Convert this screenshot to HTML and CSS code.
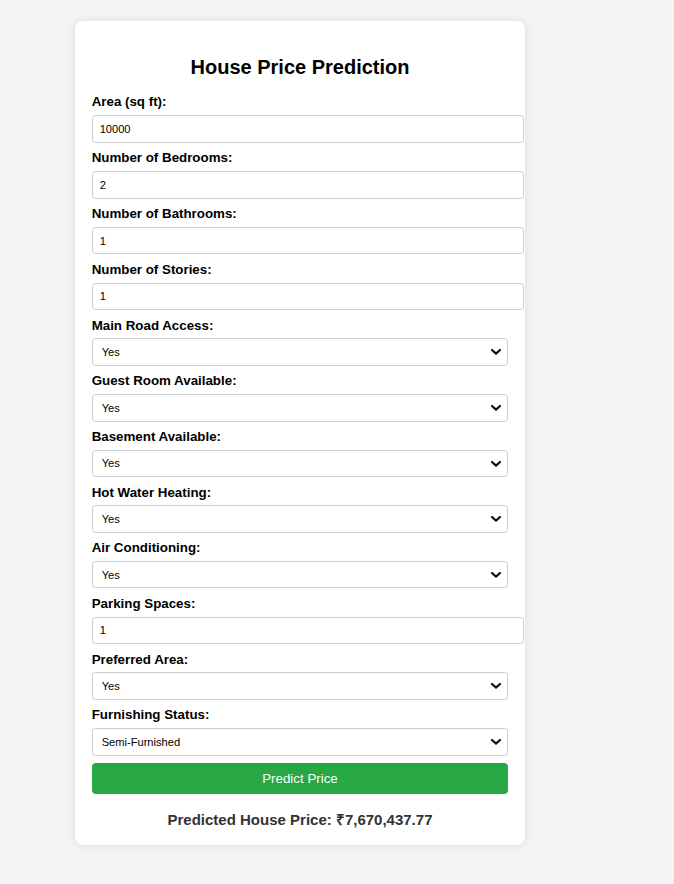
FILE: index.html
```html
<!DOCTYPE html>
<html lang="en">
<head>
<meta charset="utf-8">
<title>House Price Prediction</title>
<link rel="stylesheet" href="styles.css">
</head>
<body>
<div class="card">
  <h2 class="title">House Price Prediction</h2>
  <form class="form">
    <label class="label">Area (sq ft):</label>
    <input class="input" type="text" value="10000">
    <label class="label">Number of Bedrooms:</label>
    <input class="input" type="text" value="2">
    <label class="label">Number of Bathrooms:</label>
    <input class="input" type="text" value="1">
    <label class="label">Number of Stories:</label>
    <input class="input" type="text" value="1">
    <label class="label">Main Road Access:</label>
    <div class="select-wrap"><select class="select"><option>Yes</option><option>No</option></select><svg class="chevron" viewBox="0 0 10 6" width="10" height="6"><polyline points="1,1 5,4.6 9,1" fill="none" stroke="#111" stroke-width="2.2" stroke-linecap="round" stroke-linejoin="round"/></svg></div>
    <label class="label">Guest Room Available:</label>
    <div class="select-wrap"><select class="select"><option>Yes</option><option>No</option></select><svg class="chevron" viewBox="0 0 10 6" width="10" height="6"><polyline points="1,1 5,4.6 9,1" fill="none" stroke="#111" stroke-width="2.2" stroke-linecap="round" stroke-linejoin="round"/></svg></div>
    <label class="label">Basement Available:</label>
    <div class="select-wrap"><select class="select"><option>Yes</option><option>No</option></select><svg class="chevron" viewBox="0 0 10 6" width="10" height="6"><polyline points="1,1 5,4.6 9,1" fill="none" stroke="#111" stroke-width="2.2" stroke-linecap="round" stroke-linejoin="round"/></svg></div>
    <label class="label">Hot Water Heating:</label>
    <div class="select-wrap"><select class="select"><option>Yes</option><option>No</option></select><svg class="chevron" viewBox="0 0 10 6" width="10" height="6"><polyline points="1,1 5,4.6 9,1" fill="none" stroke="#111" stroke-width="2.2" stroke-linecap="round" stroke-linejoin="round"/></svg></div>
    <label class="label">Air Conditioning:</label>
    <div class="select-wrap"><select class="select"><option>Yes</option><option>No</option></select><svg class="chevron" viewBox="0 0 10 6" width="10" height="6"><polyline points="1,1 5,4.6 9,1" fill="none" stroke="#111" stroke-width="2.2" stroke-linecap="round" stroke-linejoin="round"/></svg></div>
    <label class="label">Parking Spaces:</label>
    <input class="input" type="text" value="1">
    <label class="label">Preferred Area:</label>
    <div class="select-wrap"><select class="select"><option>Yes</option><option>No</option></select><svg class="chevron" viewBox="0 0 10 6" width="10" height="6"><polyline points="1,1 5,4.6 9,1" fill="none" stroke="#111" stroke-width="2.2" stroke-linecap="round" stroke-linejoin="round"/></svg></div>
    <label class="label">Furnishing Status:</label>
    <div class="select-wrap"><select class="select"><option>Semi-Furnished</option><option>Furnished</option><option>Unfurnished</option></select><svg class="chevron" viewBox="0 0 10 6" width="10" height="6"><polyline points="1,1 5,4.6 9,1" fill="none" stroke="#111" stroke-width="2.2" stroke-linecap="round" stroke-linejoin="round"/></svg></div>
    <button class="button" type="button">Predict Price</button>
  </form>
  <h3 class="result">Predicted House Price: ₹7,670,437.77</h3>
</div>
</body>
</html>
```
FILE: styles.css
```css
html, body {
  margin: 0;
  padding: 0;
}

body {
  background: #f4f4f4;
  font-family: "Liberation Sans", Arial, sans-serif;
  color: #000;
  padding: 21px 0 0 75px;
  min-height: 884px;
  box-sizing: border-box;
}

.card {
  width: 450px;
  box-sizing: border-box;
  padding: 16.67px;
  background: #fff;
  border-radius: 8px;
  box-shadow: 0 0 10px rgba(0, 0, 0, 0.1);
}

.title {
  font-size: 20px;
  line-height: 23px;
  font-weight: bold;
  text-align: center;
  margin: 18px 0 15.5px;
}

.form {
  margin: 0;
}

.label {
  display: block;
  font-size: 13.33px;
  line-height: 15.33px;
  font-weight: bold;
  margin: 0;
}

.input {
  display: block;
  width: 100%;
  box-sizing: content-box;
  height: 25.75px;
  padding: 0 7px;
  margin: 5.5px 0 7.3px;
  border: 1px solid #ccc;
  border-radius: 3.5px;
  font-family: "Liberation Sans", Arial, sans-serif;
  font-size: 11.11px;
  color: #000;
  background: #fff;
  outline: none;
}

.select-wrap {
  position: relative;
  margin: 5.5px 0 7.3px;
}

.select {
  display: block;
  width: 100%;
  box-sizing: border-box;
  height: 27.5px;
  padding: 0 7px 0 9px;
  margin: 0;
  border: 1px solid #ccc;
  border-radius: 3.5px;
  font-family: "Liberation Sans", Arial, sans-serif;
  font-size: 11.11px;
  color: #000;
  background: #fff;
  -webkit-appearance: none;
  appearance: none;
  outline: none;
}

.chevron {
  position: absolute;
  right: 7px;
  top: 11px;
  pointer-events: none;
}

.button {
  display: block;
  width: 100%;
  height: 31px;
  margin: 0;
  padding: 0;
  border: none;
  border-radius: 4px;
  background: #28a745;
  color: #fff;
  font-family: "Liberation Sans", Arial, sans-serif;
  font-size: 13.33px;
}

.result {
  margin: 17px 0 0;
  font-size: 15px;
  line-height: 17.25px;
  font-weight: bold;
  text-align: center;
  color: #333;
}
```
